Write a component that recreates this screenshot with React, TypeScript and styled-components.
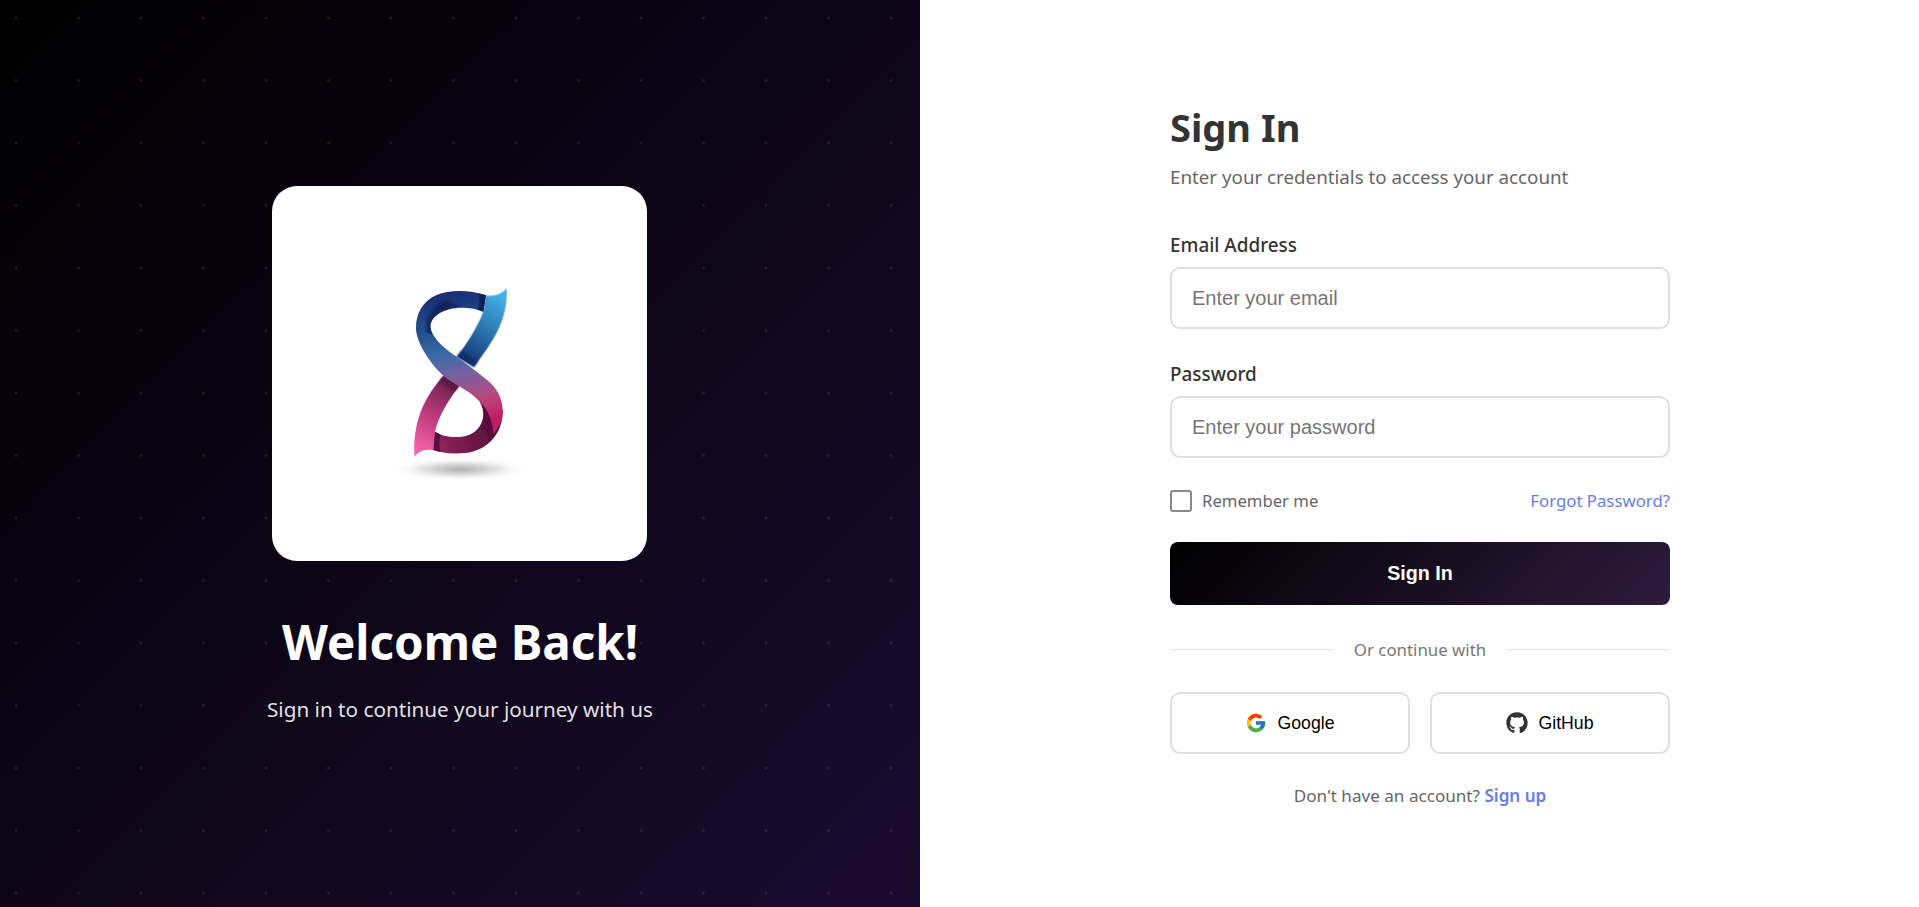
import React from "react";
import styled, { createGlobalStyle } from "styled-components";
import { FcGoogle } from "react-icons/fc";
import { FaGithub } from "react-icons/fa";

const Global = createGlobalStyle`
  * { box-sizing: border-box; }
  html, body { margin: 0; padding: 0; height: 100%; }
  body { font-family: "Noto Sans", "Open Sans", sans-serif; background: #fff; }
`;

const Page = styled.div`
  display: flex;
  width: 100%;
  height: 907px;
  overflow: hidden;
`;

const Brand = styled.section`
  width: 920px;
  flex: none;
  position: relative;
  display: flex;
  flex-direction: column;
  align-items: center;
  justify-content: center;
  background: linear-gradient(135deg, #000 0%, #1a0b2e 100%);
  color: #fff;
  &::before {
    content: "";
    position: absolute;
    inset: 0;
    background-image: radial-gradient(circle at 16px 18px, rgba(255, 255, 255, 0.15) 0, rgba(255, 255, 255, 0.07) 1px, transparent 2px);
    background-size: 62.5px 62.5px;
  }
`;

const BrandInner = styled.div`
  position: relative;
  display: flex;
  flex-direction: column;
  align-items: center;
  padding-top: 2px;
`;

const LogoCard = styled.div`
  width: 375px;
  height: 375px;
  background: #fff;
  border-radius: 25px;
  overflow: hidden;
  margin-bottom: 48px;
  svg { display: block; }
`;

const BrandTitle = styled.h1`
  margin: 0 0 21px;
  font-size: 47.5px;
  line-height: 65px;
  font-weight: 700;
`;

const BrandText = styled.p`
  margin: 0;
  font-size: 20.7px;
  line-height: 29px;
  color: rgba(255, 255, 255, 0.9);
`;

const FormSide = styled.section`
  flex: 1;
  display: flex;
  align-items: center;
  justify-content: center;
  padding: 2px 0 0 1px;
  background: #fff;
`;

const Form = styled.form`
  width: 500px;
  display: flex;
  flex-direction: column;
`;

const Title = styled.h2`
  margin: 0 0 11px;
  font-size: 38px;
  line-height: 52px;
  font-weight: 700;
  color: #333;
`;

const Subtitle = styled.p`
  margin: 0 0 42px;
  font-size: 18.75px;
  line-height: 26px;
  color: #666;
`;

const Fields = styled.div`
  display: flex;
  flex-direction: column;
  gap: 32px;
  margin-bottom: 31px;
`;

const Field = styled.div`
  display: flex;
  flex-direction: column;
`;

const Label = styled.label`
  font-size: 18.9px;
  line-height: 26px;
  font-weight: 500;
  color: #333;
  margin-bottom: 9px;
`;

const Input = styled.input`
  height: 62px;
  padding: 0 20px;
  border: 2px solid #e0e0e0;
  border-radius: 10px;
  font-family: "Liberation Sans", Arial, sans-serif;
  font-size: 20px;
  color: #333;
  background: #fff;
  outline: none;
  &::placeholder { color: #757575; }
`;

const Options = styled.div`
  display: flex;
  align-items: center;
  justify-content: space-between;
  margin-bottom: 30px;
`;

const Remember = styled.label`
  display: flex;
  align-items: center;
  gap: 10px;
  font-size: 16.7px;
  line-height: 23px;
  color: #666;
`;

const Check = styled.input`
  appearance: none;
  width: 22px;
  height: 22px;
  margin: 0;
  border: 2px solid #8a8a8a;
  border-radius: 3px;
  background: #fff;
`;

const Forgot = styled.a`
  font-size: 16.8px;
  line-height: 23px;
  color: #667eea;
`;

const Submit = styled.button`
  height: 63px;
  border: none;
  border-radius: 8px;
  background: linear-gradient(135deg, #000 0%, #2d1b3d 100%);
  color: #fff;
  font-family: "Liberation Sans", Arial, sans-serif;
  font-size: 19.7px;
  font-weight: 700;
`;

const Divider = styled.div`
  display: flex;
  align-items: center;
  gap: 20px;
  margin: 33px 0 31px;
  font-size: 16.85px;
  line-height: 23px;
  color: #777;
  &::before, &::after {
    content: "";
    flex: 1;
    height: 1px;
    background: #e0e0e0;
  }
`;

const Socials = styled.div`
  display: grid;
  grid-template-columns: 1fr 1fr;
  gap: 20px;
  margin-bottom: 30px;
`;

const Social = styled.button`
  height: 62px;
  display: flex;
  align-items: center;
  justify-content: center;
  gap: 10px;
  border: 2px solid #e0e0e0;
  border-radius: 10px;
  background: #fff;
  color: #000;
  font-family: "Liberation Sans", Arial, sans-serif;
  font-size: 17.7px;
  svg { flex: none; }
`;

const Foot = styled.p`
  margin: 0;
  text-align: center;
  font-size: 17.1px;
  line-height: 24px;
  color: #666;
  a { color: #667eea; font-weight: 600; }
`;

const Logo = () => (
  <svg width="375" height="375" viewBox="6 18 1125 1125">
    <defs>
      <linearGradient id="bladeTop" gradientUnits="userSpaceOnUse" x1="700" y1="340" x2="570" y2="550">
        <stop offset="0" stopColor="#45b5ec" />
        <stop offset="0.55" stopColor="#2a6ea9" />
        <stop offset="1" stopColor="#12306f" />
      </linearGradient>
      <linearGradient id="bladeBottom" gradientUnits="userSpaceOnUse" x1="440" y1="820" x2="560" y2="600">
        <stop offset="0" stopColor="#fb66ad" />
        <stop offset="0.5" stopColor="#bb3a78" />
        <stop offset="1" stopColor="#5e1b49" />
      </linearGradient>
      <linearGradient id="ribbon" gradientUnits="userSpaceOnUse" x1="560" y1="340" x2="620" y2="720">
        <stop offset="0" stopColor="#1b2f74" />
        <stop offset="0.28" stopColor="#245290" />
        <stop offset="0.46" stopColor="#3a6ca8" />
        <stop offset="0.62" stopColor="#7460a0" />
        <stop offset="0.82" stopColor="#b84a80" />
        <stop offset="1" stopColor="#c01f62" />
      </linearGradient>
      <linearGradient id="bottomLoop" gradientUnits="userSpaceOnUse" x1="500" y1="800" x2="670" y2="720">
        <stop offset="0" stopColor="#93235c" />
        <stop offset="1" stopColor="#4f0d39" />
      </linearGradient>
      <radialGradient id="floor">
        <stop offset="0" stopColor="#adadad" />
        <stop offset="0.45" stopColor="#cfcfcf" stopOpacity="0.75" />
        <stop offset="1" stopColor="#fff" stopOpacity="0" />
      </radialGradient>
      <filter id="soft" x="-5%" y="-5%" width="110%" height="110%">
        <feGaussianBlur stdDeviation="1.4" />
      </filter>
      <filter id="shade" x="-30%" y="-30%" width="160%" height="160%">
        <feGaussianBlur stdDeviation="5" />
      </filter>
      <clipPath id="topClip">
        <path d="M648 346C600 330 540 328 500 345C456 363 437 405 438 447L490 465C475 440 480 420 505 402C540 378 600 378 640 395Z" />
      </clipPath>
    </defs>
    <ellipse cx="570" cy="868" rx="210" ry="36" fill="url(#floor)" />
    <g filter="url(#soft)">
      <path d="M710 325C694 343 672 349 648 347L640 395C620 445 592 490 560 530L612 561C672 480 714 420 710 325Z" fill="url(#bladeTop)" />
      <path d="M560 530L612 561L624 543L574 512Z" fill="#0e255c" opacity="0.65" filter="url(#shade)" />
      <path d="M433 830C448 811 468 807 490 810L495 755C505 710 535 660 568 618L520 587C465 650 428 720 433 830Z" fill="url(#bladeBottom)" />
      <path d="M520 587L568 618L556 634L508 602Z" fill="#4f1240" opacity="0.7" filter="url(#shade)" />
      <path d="M490 810L495 755C525 775 590 780 620 750C645 725 645 690 628 664L698 690C700 760 650 820 570 820C540 822 512 818 490 810Z" fill="url(#bottomLoop)" />
      <path d="M490 810L495 755L512 764C506 780 508 798 512 816Z" fill="#5a1040" />
      <path d="M648 346C600 330 540 328 500 345C456 363 437 405 438 447C440 490 480 550 520 587C560 618 600 632 628 664C655 690 668 725 670 762C690 740 700 715 698 690C696 650 680 625 655 603C625 578 590 552 560 530C530 510 505 490 490 465C475 440 480 420 505 402C540 378 600 378 640 395Z" fill="url(#ribbon)" />
      <g clipPath="url(#topClip)">
        <path d="M626 335L655 340L645 400L622 390C628 372 630 358 626 335Z" fill="#0f2159" />
        <path d="M530 360C480 378 458 425 474 472L500 480C476 445 482 428 505 402C520 392 535 383 570 378Z" fill="#0c1d52" opacity="0.75" filter="url(#shade)" />
      </g>
    </g>
  </svg>
);

export default function App() {
  return (
    <Page>
      <Global />
      <Brand>
        <BrandInner>
          <LogoCard>
            <Logo />
          </LogoCard>
          <BrandTitle>Welcome Back!</BrandTitle>
          <BrandText>Sign in to continue your journey with us</BrandText>
        </BrandInner>
      </Brand>
      <FormSide>
        <Form>
          <Title>Sign In</Title>
          <Subtitle>Enter your credentials to access your account</Subtitle>
          <Fields>
            <Field>
              <Label>Email Address</Label>
              <Input type="email" placeholder="Enter your email" />
            </Field>
            <Field>
              <Label>Password</Label>
              <Input type="password" placeholder="Enter your password" />
            </Field>
          </Fields>
          <Options>
            <Remember>
              <Check type="checkbox" />
              Remember me
            </Remember>
            <Forgot>Forgot Password?</Forgot>
          </Options>
          <Submit type="button">Sign In</Submit>
          <Divider>Or continue with</Divider>
          <Socials>
            <Social type="button">
              <FcGoogle size={22} />
              Google
            </Social>
            <Social type="button">
              <FaGithub size={22} color="#333" />
              GitHub
            </Social>
          </Socials>
          <Foot>
            Don't have an account? <a>Sign up</a>
          </Foot>
        </Form>
      </FormSide>
    </Page>
  );
}
